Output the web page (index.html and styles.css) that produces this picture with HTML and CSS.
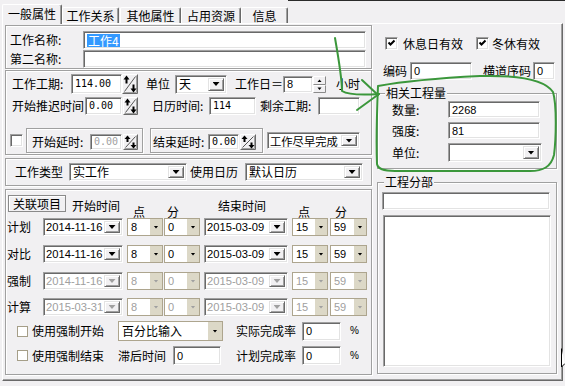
FILE: index.html
```html
<!DOCTYPE html>
<html lang="zh-CN">
<head>
<meta charset="utf-8">
<title>工作属性</title>
<link rel="stylesheet" href="styles.css">
</head>
<body>
<div class="tabs">
  <div class="tab active">一般属性</div>
  <div class="tab t2">工作关系</div>
  <div class="tab t3">其他属性</div>
  <div class="tab t4">占用资源</div>
  <div class="tab t5">信息</div>
  <div class="tabfill"></div>
</div>
<div class="page">
  <div class="leftcol">
    <div class="frame namebox">
      <div class="row h18">
        <span class="lbl w73">工作名称:</span>
        <div class="sunk inp w283 h18"><span class="sel">工作4</span></div>
      </div>
      <div class="row h18 mt1">
        <span class="lbl w73">第二名称:</span>
        <div class="sunk inp w283 h18"></div>
      </div>
    </div>

    <div class="frame boxA">
      <div class="row h20">
        <span class="lbl w59">工作工期:</span>
        <div class="sunk inp w51 h20 m6">114.00</div>
        <svg class="spin" width="16" height="20" viewBox="0 0 16 20"><rect width="16" height="20" fill="#f1f0f2"/><path d="M.5 19.5V.5H15.5" fill="none" stroke="#fff"/><path d="M.5 19.5H15.5V.5" fill="none" stroke="#696969"/><path d="M1.5 18.5H14.5V1.5" fill="none" stroke="#a0a0a0"/><path d="M2.5 17.5 13.5 2.5" stroke="#555"/><path d="M4.5 9.5V4" stroke="#000" stroke-width="2"/><path d="M1.5 5.5 4.5 1.5 7.5 5.5Z"/><path d="M11.5 10.5V16" stroke="#000" stroke-width="2"/><path d="M8.5 14.5 11.5 18.5 14.5 14.5Z"/></svg>
        <span class="lbl w29 ml8">单位</span>
        <div class="sunk cb w52 h19"><span class="ct">天</span><span class="btn"><i class="arr"></i></span></div>
        <span class="lbl w48 ml8">工作日＝</span>
        <div class="sunk inp w30 h17 ss">8</div>
        <svg class="spin2" width="13" height="17" viewBox="0 0 13 17"><rect width="13" height="17" fill="#f1f0f2"/><path d="M.5 8V.5H12" stroke="#fff" fill="none"/><path d="M.5 8.5H12.5V.5" stroke="#8a8a8a" fill="none"/><path d="M.5 16V9.5H12" stroke="#fff" fill="none"/><path d="M.5 16.5H12.5V9.5" stroke="#8a8a8a" fill="none"/><path d="M4.5 6h4L6.5 3.5z"/><path d="M4.5 11.5h4L6.5 14z"/></svg>
        <span class="lbl ml10">小时</span>
      </div>
      <div class="row h18 mt3">
        <span class="lbl w73">开始推迟时间</span>
        <div class="sunk inp w37 h18 m6">0.00</div>
        <svg class="spin ml1" width="15" height="18" viewBox="0 0 15 18"><rect width="15" height="18" fill="#f1f0f2"/><path d="M.5 17.5V.5H14.5" fill="none" stroke="#fff"/><path d="M.5 17.5H14.5V.5" fill="none" stroke="#696969"/><path d="M1.5 16.5H13.5V1.5" fill="none" stroke="#a0a0a0"/><path d="M2.5 15.5 12.5 2.5" stroke="#555"/><path d="M4.5 8.5V4" stroke="#000" stroke-width="2"/><path d="M1.5 5.5 4.5 1.5 7.5 5.5Z"/><path d="M10.5 9.5V14" stroke="#000" stroke-width="2"/><path d="M7.5 12.5 10.5 16.5 13.5 12.5Z"/></svg>
        <span class="lbl w57 ml14">日历时间:</span>
        <div class="sunk inp w47 h18 m6">114</div>
        <span class="lbl w58 ml4">剩余工期:</span>
        <div class="sunk inp w42 h18"></div>
      </div>
      <div class="row h25 mt13">
        <span class="chk mln2"></span>
        <div class="frame gb gb1">
          <span class="lbl w58">开始延时:</span>
          <div class="sunk inp w32 h16 m6 dis">0.00</div>
          <svg class="spin ml1" width="15" height="16" viewBox="0 0 15 16"><rect width="15" height="16" fill="#f1f0f2"/><path d="M.5 15.5V.5H14.5" fill="none" stroke="#fff"/><path d="M.5 15.5H14.5V.5" fill="none" stroke="#696969"/><path d="M1.5 14.5H13.5V1.5" fill="none" stroke="#a0a0a0"/><path d="M2.5 13.5 12.5 2.5" stroke="#555"/><path d="M4.5 8V4" stroke="#000" stroke-width="2"/><path d="M1.5 5 4.5 1.5 7.5 5Z"/><path d="M10.5 8.5V12" stroke="#000" stroke-width="2"/><path d="M7.5 11 10.5 14.5 13.5 11Z"/></svg>
        </div>
        <div class="frame gb gb2">
          <span class="lbl w55">结束延时:</span>
          <div class="sunk inp w31 h16 m6">0.00</div>
          <svg class="spin ml1" width="16" height="16" viewBox="0 0 16 16"><rect width="16" height="16" fill="#f1f0f2"/><path d="M.5 15.5V.5H15.5" fill="none" stroke="#fff"/><path d="M.5 15.5H15.5V.5" fill="none" stroke="#696969"/><path d="M1.5 14.5H14.5V1.5" fill="none" stroke="#a0a0a0"/><path d="M2.5 13.5 13.5 2.5" stroke="#555"/><path d="M4.5 8V4" stroke="#000" stroke-width="2"/><path d="M1.5 5 4.5 1.5 7.5 5Z"/><path d="M11.5 8.5V12" stroke="#000" stroke-width="2"/><path d="M8.5 11 11.5 14.5 14.5 11Z"/></svg>
        </div>
        <div class="sunk cb dc w93 h17 ml4"><span class="ct small">工作尽早完成</span><span class="btn"><i class="arr"></i></span></div>
      </div>
    </div>

    <div class="frame boxB row">
      <span class="lbl w54">工作类型</span>
      <div class="sunk cb w118 h18"><span class="ct">实工作</span><span class="btn"><i class="arr"></i></span></div>
      <span class="lbl w55 ml3">使用日历</span>
      <div class="sunk cb w118 h18"><span class="ct">默认日历</span><span class="btn"><i class="arr"></i></span></div>
    </div>

    <div class="frame boxC">
      <div class="hdr">
        <span class="btnx">关联项目</span>
        <span class="hd hd1">开始时间</span>
        <span class="hd hd2">点</span>
        <span class="hd hd3">分</span>
        <span class="hd hd4">结束时间</span>
        <span class="hd hd5">点</span>
        <span class="hd hd6">分</span>
      </div>
      <div class="row h18">
        <span class="lbl w36 ml1">计划</span>
        <div class="sunk cb dc w80 h18"><span class="ct m7">2014-11-16</span><span class="btn"><i class="arr"></i></span></div>
        <div class="bc w36 h18 ml4"><span class="ss">8</span><span class="bb"><i class="sarr"></i></span></div>
        <div class="bc w36 h18 ml1"><span class="ss">0</span><span class="bb"><i class="sarr"></i></span></div>
        <div class="sunk cb dc w84 h18 ml4"><span class="ct m7">2015-03-09</span><span class="btn"><i class="arr"></i></span></div>
        <div class="bc w36 h18 ml4"><span class="ss">15</span><span class="bb"><i class="sarr"></i></span></div>
        <div class="bc w37 h18 ml2"><span class="ss">59</span><span class="bb"><i class="sarr"></i></span></div>
      </div>
      <div class="row h18 mt9">
        <span class="lbl w36 ml1">对比</span>
        <div class="sunk cb dc w80 h18"><span class="ct m7">2014-11-16</span><span class="btn"><i class="arr"></i></span></div>
        <div class="bc w36 h18 ml4"><span class="ss">8</span><span class="bb"><i class="sarr"></i></span></div>
        <div class="bc w36 h18 ml1"><span class="ss">0</span><span class="bb"><i class="sarr"></i></span></div>
        <div class="sunk cb dc w84 h18 ml4"><span class="ct m7">2015-03-09</span><span class="btn"><i class="arr"></i></span></div>
        <div class="bc w36 h18 ml4"><span class="ss">15</span><span class="bb"><i class="sarr"></i></span></div>
        <div class="bc w37 h18 ml2"><span class="ss">59</span><span class="bb"><i class="sarr"></i></span></div>
      </div>
      <div class="row h18 mt9 dis">
        <span class="lbl w36 ml1 ink">强制</span>
        <div class="sunk cb dc w80 h18"><span class="ct m7">2014-11-16</span><span class="btn"><i class="arr"></i></span></div>
        <div class="bc w36 h18 ml4"><span class="ss">8</span><span class="bb"><i class="sarr"></i></span></div>
        <div class="bc w36 h18 ml1"><span class="ss">0</span><span class="bb"><i class="sarr"></i></span></div>
        <div class="sunk cb dc w84 h18 ml4"><span class="ct m7">2015-03-09</span><span class="btn"><i class="arr"></i></span></div>
        <div class="bc w36 h18 ml4"><span class="ss">15</span><span class="bb"><i class="sarr"></i></span></div>
        <div class="bc w37 h18 ml2"><span class="ss">59</span><span class="bb"><i class="sarr"></i></span></div>
      </div>
      <div class="row h18 mt8 dis">
        <span class="lbl w36 ml1 ink">计算</span>
        <div class="sunk cb dc w80 h18"><span class="ct m7">2015-03-31</span><span class="btn"><i class="arr"></i></span></div>
        <div class="bc w36 h18 ml4"><span class="ss">8</span><span class="bb"><i class="sarr"></i></span></div>
        <div class="bc w36 h18 ml1"><span class="ss">0</span><span class="bb"><i class="sarr"></i></span></div>
        <div class="sunk cb dc w84 h18 ml4"><span class="ct m7">2015-03-09</span><span class="btn"><i class="arr"></i></span></div>
        <div class="bc w36 h18 ml4"><span class="ss">15</span><span class="bb"><i class="sarr"></i></span></div>
        <div class="bc w37 h18 ml2"><span class="ss">59</span><span class="bb"><i class="sarr"></i></span></div>
      </div>
      <div class="row h20 mt5">
        <span class="chk2 ml11"></span>
        <span class="lbl w86 ml4">使用强制开始</span>
        <div class="bc w105 h20"><span>百分比输入</span><span class="bb bbw"><i class="sarr"></i></span></div>
        <span class="lbl w66 ml13">实际完成率</span>
        <div class="sunk inp w39 h19 ss">0</div>
        <span class="pct">%</span>
      </div>
      <div class="row h19 mt5">
        <span class="chk2 ml11"></span>
        <span class="lbl w86 ml4">使用强制结束</span>
        <span class="lbl w55">滞后时间</span>
        <div class="sunk inp w48 h19 ss">0</div>
        <span class="lbl w66 ml15">计划完成率</span>
        <div class="sunk inp w39 h19 ss">0</div>
        <span class="pct">%</span>
      </div>
    </div>
  </div>

  <div class="rightcol">
    <div class="row h13 chkrow">
      <span class="chk"><svg width="11" height="11" viewBox="0 0 11 11"><path d="M2.5 4.5 4.5 6.5 8.5 2.5" stroke="#000" stroke-width="2" fill="none"/></svg></span>
      <span class="lbl ml5">休息日有效</span>
      <span class="chk ml13"><svg width="11" height="11" viewBox="0 0 11 11"><path d="M2.5 4.5 4.5 6.5 8.5 2.5" stroke="#000" stroke-width="2" fill="none"/></svg></span>
      <span class="lbl ml3">冬休有效</span>
    </div>
    <div class="row h18 mt12 pl7">
      <span class="lbl w27">编码</span>
      <div class="sunk inp w62 h18 ss">0</div>
      <span class="lbl w50 ml11">横道序码</span>
      <div class="sunk inp w22 h18 ss">0</div>
    </div>
    <div class="frame grp g1">
      <div class="gt">相关工程量</div>
      <div class="row h17 mt1"><span class="lbl w56">数量:</span><div class="sunk inp w92 h17 ss">2268</div></div>
      <div class="row h17 mt4"><span class="lbl w56">强度:</span><div class="sunk inp w92 h17 ss">81</div></div>
      <div class="row h19 mt4"><span class="lbl w56">单位:</span><div class="sunk cb w94 h19"><span class="ct"></span><span class="btn"><i class="arr"></i></span></div></div>
    </div>
    <div class="frame grp g2">
      <div class="gt">工程分部</div>
      <div class="sunk w168 h18 mt3"></div>
      <div class="sunk w168 h152 mt5 ml1"></div>
    </div>
  </div>
</div>

<svg class="overlay" width="565" height="386" viewBox="0 0 565 386">
  <g fill="none" stroke="#3b973b" stroke-width="2" stroke-linecap="round" stroke-linejoin="round">
    <path d="M335 38 Q342 78 342 91 Q350 96 379 94"/>
    <path d="M362 80 L378 95"/>
    <path d="M357 110 L379 94"/>
    <path d="M377 164 C376 140 377 110 378 86 C400 82 440 78 480 76 C520 75 545 80 553 92 C557 105 556 140 554 155 C551 167 543 171 530 171 L395 171 C383 171 378 169 377 164"/>
  </g>
  <path d="M561.5 348.5 V367 L565 363.5" fill="#fff" stroke="#000"/>
</svg>
</body>
</html>
```

FILE: styles.css
```css
* { box-sizing: border-box; margin: 0; padding: 0; }
body {
  width: 565px; height: 386px; overflow: hidden;
  background: #f1f0f2;
  font-family: "Noto Sans CJK SC", "Noto Sans CJK JP", sans-serif;
  font-size: 12px; line-height: 14px; color: #000;
  position: relative;
}
.tabs { display: flex; align-items: flex-end; height: 23px; padding-left: 2px; position: relative; z-index: 2; }
.tab {
  height: 16px; display: flex; align-items: center; justify-content: center;
  border-top: 1px solid #fff; border-left: 1px solid #fff; border-right: 1px solid #696969;
  box-shadow: inset -1px 0 0 #a0a0a0; border-radius: 2px 2px 0 0;
  background: #f1f0f2; padding-top: 1px; white-space: nowrap;
}
.tab.active { width: 60px; height: 20px; margin-bottom: -1px; padding-bottom: 3px; }
.t2 { width: 57px; } .t3 { width: 61px; margin-left: 1px; } .t4 { width: 60px; } .t5 { width: 47px; }
.tabfill { flex: 1; align-self: stretch; border-top: 1px solid #2a2a2a; }

.page {
  margin-left: 2px; width: 561px; height: 358px;
  border: 1px solid; border-color: #fff #696969 #696969 #fff;
  box-shadow: inset -1px -1px 0 #a0a0a0;
  display: flex;
}
.leftcol { width: 370px; flex: none; display: flex; flex-direction: column; }
.rightcol { width: 182px; flex: none; margin-left: 3px; display: flex; flex-direction: column; }

.frame { border: 1px solid #a0a0a0; box-shadow: inset 1px 1px 0 #fff, 1px 1px 0 #fff; }
.namebox { margin: 1px 0 0 2px; width: 367px; height: 44px; padding: 5px 0 0 4px; }
.boxA { margin: 1px 0 0 2px; width: 367px; height: 85px; padding: 3px 0 0 6px; }
.boxB { margin: 3px 0 0 2px; width: 367px; height: 28px; padding-left: 9px; }
.boxC { margin: 3px 0 0 2px; width: 367px; height: 186px; padding-left: 0; }

.row { display: flex; align-items: center; }
.lbl { flex: none; white-space: nowrap; }
.sunk {
  flex: none; background: #fff;
  border: 1px solid; border-color: #a0a0a0 #fff #fff #a0a0a0;
  box-shadow: inset 1px 1px 0 #696969, inset -1px -1px 0 #e3e3e3;
}
.inp { display: flex; align-items: center; padding-left: 3px; white-space: nowrap; }
.sel { background: #3399ff; color: #fff; padding: 0 1px; line-height: 13px; }
.m6 { font-family: "DejaVu Sans Mono", monospace; font-size: 10px; }
.m7 { font-family: "Liberation Sans", sans-serif; font-size: 11.2px; }
.ss { font-family: "Liberation Sans", sans-serif; font-size: 11px; }
.dis { color: #a0a0a0; }
.dis .ink { color: #000; }
.pct { font-family: "Liberation Sans", sans-serif; font-size: 10px; margin-left: 9px; }

.spin, .spin2 { flex: none; display: block; }

.cb { display: flex; align-items: center; justify-content: space-between; padding: 2px 2px 2px 3px; white-space: nowrap; }
.cb .ct { flex: 1 1 auto; line-height: 12px; }
.cb .small { font-size: 11.3px; }
.cb.dc { padding-left: 2px; }
.cb .btn {
  flex: none; align-self: stretch; width: 16px;
  display: flex; align-items: center; justify-content: center;
  background: #f1f0f2; border: 1px solid; border-color: #e3e3e3 #696969 #696969 #e3e3e3;
  box-shadow: inset 1px 1px 0 #fff, inset -1px -1px 0 #a0a0a0;
}
.arr { display: block; width: 7px; height: 4px; background: #000; clip-path: polygon(0 0, 100% 0, 50% 100%); }
.dis .arr { background: #a0a0a0; }

.bc { flex: none; display: flex; align-items: center; justify-content: space-between; background: #fff; border: 1px solid #ada58e; padding-left: 3px; white-space: nowrap; }
.bc .bb { flex: none; align-self: stretch; width: 12px; background: #dcd8c7; display: flex; align-items: center; justify-content: center; }
.bc .bbw { width: 14px; }
.sarr { display: block; width: 5px; height: 3px; background: #000; clip-path: polygon(0 0, 100% 0, 50% 100%); }
.dis .sarr { background: #a0a0a0; }

.chk {
  flex: none; width: 13px; height: 13px; background: #fff; display: block;
  border: 1px solid; border-color: #a0a0a0 #fff #fff #a0a0a0;
  box-shadow: inset 1px 1px 0 #696969, inset -1px -1px 0 #e3e3e3;
}
.chk svg { display: block; }
.chk2 { flex: none; width: 11px; height: 11px; border: 1px solid #a59e88; background: #fff; display: block; }

.gb { flex: none; height: 25px; display: flex; align-items: flex-start; padding-top: 5px; }
.gb1 { width: 117px; margin-left: 3px; padding-left: 5px; }
.gb2 { width: 113px; margin-left: 7px; padding-left: 2px; }
.gb .lbl { line-height: 16px; }

.hdr { display: flex; align-items: flex-start; height: 28px; }
.btnx {
  flex: none; margin: 5px 0 0 2px; width: 58px; height: 17px;
  display: flex; align-items: center; justify-content: center;
  border: 1px solid #8a8a8a; box-shadow: inset 1px 1px 0 #fff;
}
.hd { flex: none; white-space: nowrap; }
.hd1 { margin: 9px 0 0 6px; }
.hd2 { margin: 15px 0 0 13px; }
.hd3 { margin: 15px 0 0 22px; }
.hd4 { margin: 9px 0 0 39px; }
.hd5 { margin: 15px 0 0 32px; }
.hd6 { margin: 15px 0 0 25px; }

.chkrow { margin-top: 13px; padding-left: 9px; }
.pl7 { padding-left: 7px; }
.grp { flex: none; margin-left: 1px; width: 180px; }
.g1 { margin-top: 13px; height: 76px; padding-left: 14px; }
.g2 { margin-top: 13px; height: 192px; padding-left: 4px; }
.gt { width: fit-content; margin-top: -8px; padding: 0 1px; background: #f1f0f2; line-height: 14px; }
.g1 .gt { margin-left: -7px; }
.g2 .gt { margin-left: 2px; }

.overlay { position: absolute; left: 0; top: 0; pointer-events: none; }

/* sizes */
.w22 { width: 22px; } .w27 { width: 27px; } .w29 { width: 29px; } .w30 { width: 30px; } .w31 { width: 31px; }
.w32 { width: 32px; } .w36 { width: 36px; } .w37 { width: 37px; } .w39 { width: 39px; } .w42 { width: 42px; }
.w47 { width: 47px; } .w48 { width: 48px; } .w50 { width: 50px; } .w51 { width: 51px; } .w52 { width: 52px; }
.w54 { width: 54px; } .w55 { width: 55px; } .w56 { width: 56px; } .w57 { width: 57px; } .w58 { width: 58px; }
.w59 { width: 59px; } .w62 { width: 62px; } .w66 { width: 66px; } .w73 { width: 73px; } .w80 { width: 80px; }
.w84 { width: 84px; } .w86 { width: 86px; } .w92 { width: 92px; } .w93 { width: 93px; } .w94 { width: 94px; }
.w105 { width: 105px; } .w118 { width: 118px; } .w168 { width: 168px; } .w283 { width: 283px; }
.h13 { height: 13px; } .h16 { height: 16px; } .h17 { height: 17px; } .h18 { height: 18px; } .h19 { height: 19px; }
.h20 { height: 20px; } .h25 { height: 25px; } .h152 { height: 152px; }
.mt1 { margin-top: 1px; } .mt3 { margin-top: 3px; } .mt4 { margin-top: 4px; } .mt5 { margin-top: 5px; }
.mt8 { margin-top: 8px; } .mt9 { margin-top: 9px; } .mt12 { margin-top: 12px; } .mt13 { margin-top: 13px; }
.ml1 { margin-left: 1px; } .ml2 { margin-left: 2px; } .ml3 { margin-left: 3px; } .ml4 { margin-left: 4px; }
.ml5 { margin-left: 5px; } .ml8 { margin-left: 8px; } .ml10 { margin-left: 10px; } .ml11 { margin-left: 11px; }
.ml13 { margin-left: 13px; } .ml14 { margin-left: 14px; } .ml15 { margin-left: 15px; } .mln2 { margin-left: -2px; }
```
